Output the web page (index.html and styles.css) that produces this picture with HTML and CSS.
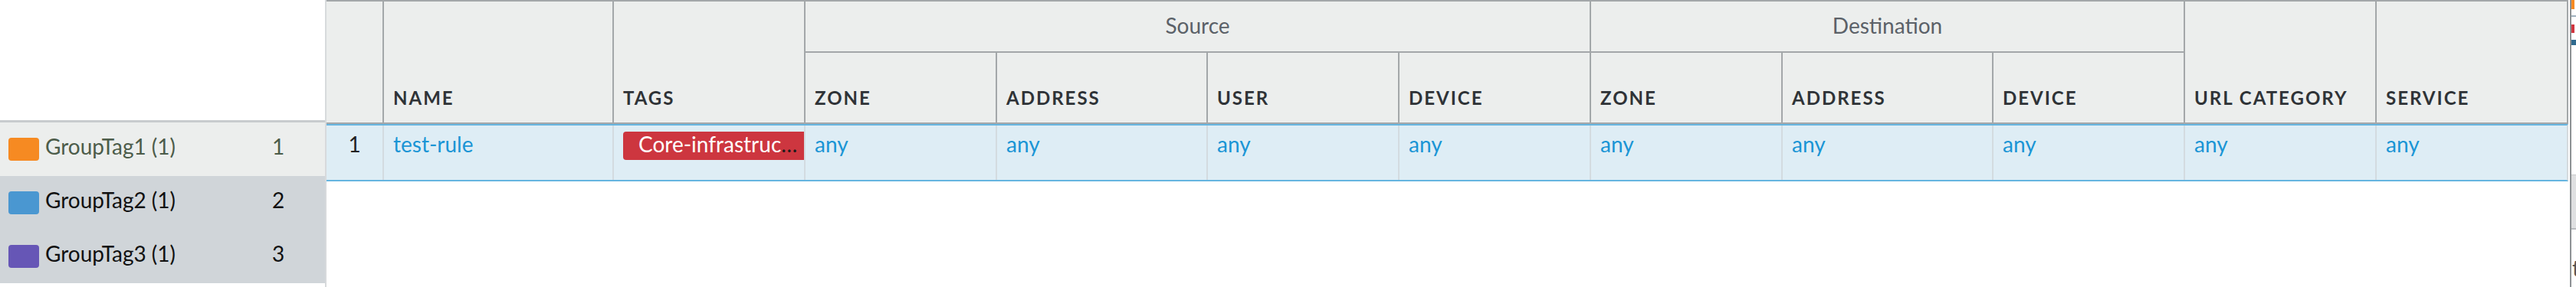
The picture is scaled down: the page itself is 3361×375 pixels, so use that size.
FILE: index.html
```html
<!DOCTYPE html>
<html lang="en">
<head>
<meta charset="utf-8">
<title>Policy rules</title>
<link rel="stylesheet" href="styles.css">
</head>
<body>
<div class="page">
  <aside class="groups">
    <div class="group-list">
      <div class="group-row is-active"><span class="swatch swatch-orange"></span><span class="group-name">GroupTag1 (1)</span><span class="group-count">1</span></div>
      <div class="group-row"><span class="swatch swatch-blue"></span><span class="group-name">GroupTag2 (1)</span><span class="group-count">2</span></div>
      <div class="group-row"><span class="swatch swatch-purple"></span><span class="group-name">GroupTag3 (1)</span><span class="group-count">3</span></div>
    </div>
  </aside>
  <main class="rules">
    <div class="rules-head">
      <div class="th th-num th-tall"></div>
      <div class="th th-tall">Name</div>
      <div class="th th-tall">Tags</div>
      <div class="th th-group th-src">Source</div>
      <div class="th th-group th-dst">Destination</div>
      <div class="th th-tall">URL Category</div>
      <div class="th th-tall">Service</div>
      <div class="th">Zone</div>
      <div class="th">Address</div>
      <div class="th">User</div>
      <div class="th">Device</div>
      <div class="th">Zone</div>
      <div class="th">Address</div>
      <div class="th">Device</div>
    </div>
    <div class="rules-row">
      <div class="td td-num">1</div>
      <div class="td">test-rule</div>
      <div class="td td-tags"><div class="tag"><span class="tag-text">Core-infrastructure</span></div></div>
      <div class="td">any</div>
      <div class="td">any</div>
      <div class="td">any</div>
      <div class="td">any</div>
      <div class="td">any</div>
      <div class="td">any</div>
      <div class="td">any</div>
      <div class="td">any</div>
      <div class="td">any</div>
    </div>
  </main>
  <div class="overview">
    <span class="ov-mark ov-orange"></span>
    <span class="ov-line"></span>
    <span class="ov-mark ov-red"></span>
    <span class="ov-bar"></span>
    <span class="ov-block"></span>
    <span class="ov-text">t</span>
  </div>
</div>
</body>
</html>
```
FILE: styles.css
```css
* { box-sizing: border-box; }
html, body { margin: 0; padding: 0; background: #fff; }
body { font-family: Lato, "Noto Sans", sans-serif; color: #222; }

.page { display: flex; width: 3361px; height: 375px; overflow: hidden; }

/* left group list */
.groups { flex: 0 0 426px; border-right: 2px solid #d7dadc; padding-top: 157px; }
.group-list { border-top: 3px solid #c8cbce; }
.group-row {
  display: grid; grid-template-columns: 40px 288px auto; column-gap: 8px;
  align-items: center; height: 70px; padding-left: 11px;
  background: #d0d5d9; color: #111; font-size: 28px; line-height: 30px;
}
.group-row.is-active { background: #eceeed; color: #4c5c4a; }
.group-name, .group-count { align-self: start; margin-top: 16px; white-space: nowrap; }
.swatch { width: 40px; height: 30px; border-radius: 4px; }
.swatch-orange { background: #f68a22; }
.swatch-blue { background: #4a97d1; }
.swatch-purple { background: #6656b6; }

/* rules table */
.rules { flex: 0 0 2925px; --cols: 73px 300px 250px 250px 275px 250px 250px 250px 275px 250px 250px 250px; }
.rules-head {
  display: grid; grid-template-columns: var(--cols); grid-template-rows: 67px 91px;
  background: #eceeed; border-top: 2px solid #a3a7a9; border-right: 2px solid #a3a7a9; border-bottom: 2px solid #a3a7a9;
}
.th {
  border-left: 2px solid #a3a7a9; padding: 0 12px 18px; display: flex; align-items: flex-end;
  font-weight: 700; font-size: 24px; line-height: 28px; letter-spacing: 2px; color: #2f3337; text-transform: uppercase;
  white-space: nowrap;
}
.th-num { border-left: 0; }
.th-tall { grid-row: span 2; }
.th-group {
  justify-content: center; align-items: center; padding: 0 0 3px; border-bottom: 2px solid #a3a7a9;
  font-weight: 400; font-size: 28px; line-height: 34px; letter-spacing: 0; text-transform: none; color: #5b6168;
}
.th-src { grid-column: span 4; }
.th-dst { grid-column: span 3; }

.rules-row {
  display: grid; grid-template-columns: var(--cols); height: 75px;
  background: #deedf5; border-top: 2px solid #65b5e0; border-bottom: 2px solid #65b5e0; border-right: 2px solid #d4dadd;
}
.td {
  border-left: 2px solid #d3dbe0; padding: 8px 12px 0; font-size: 28px; line-height: 33px;
  color: #1a95d5; overflow: hidden; white-space: nowrap;
}
.td-num { border-left: 0; text-align: center; color: #222; }
.td-tags { padding-right: 0; }
.tag {
  width: calc(100% + 10px); padding: 0 15px 4px 20px; border-radius: 4px;
  background: #cd363f; color: #1a1a1a; overflow: hidden; text-overflow: ellipsis; white-space: nowrap;
}
.tag-text { color: #fff; }

/* right overview strip */
.overview { flex: 0 0 8px; margin-left: 2px; border-left: 2px solid #8e9295; display: flex; flex-direction: column; overflow: hidden; }
.ov-mark { display: block; width: 4px; }
.ov-orange { height: 12px; background: #f68a22; }
.ov-line { display: block; height: 2px; margin-top: 8px; background: #9fb0bd; }
.ov-red { height: 11px; margin-top: 10px; background: #d0353f; }
.ov-bar { display: block; height: 7px; margin-top: 9px; background: #2f6a8e; }
.ov-block { display: block; height: 72px; margin-top: 169px; background: #dfe0e1; border-top: 1px solid #c9cbcd; border-bottom: 2px solid #b9bcbf; }
.ov-text { display: block; margin-top: 38px; font-size: 28px; line-height: 24px; color: #555; padding-left: 1px; }
```
